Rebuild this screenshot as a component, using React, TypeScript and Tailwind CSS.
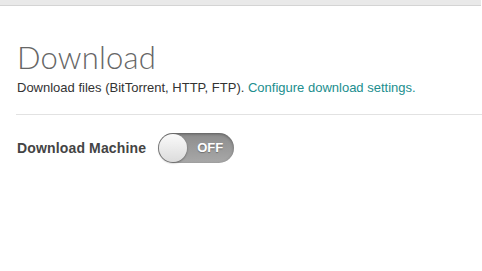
export default function App() {
  return (
    <div className="w-[482px] h-[271px] bg-white overflow-hidden font-['Liberation_Sans',Arial,sans-serif]">
      <div className="h-[6px] mr-[1px] bg-[#e9e9e9] border-b border-[#d4d4d4]" />
      <div className="pl-[17px] pt-[33px]">
        <h1 className="font-['Lato',sans-serif] font-light text-[31px] leading-[36px] text-[#666] tracking-[0.2px]">
          Download
        </h1>
        <p className="mt-[5px] text-[13px] leading-[16px] text-[#333]">
          Download files (BitTorrent, HTTP, FTP).{' '}
          <a href="#" className="text-[#218e8e]">
            Configure download settings.
          </a>
        </p>
      </div>
      <div className="ml-[16px] mt-[18px] h-px bg-[#e2e2e2]" />
      <div className="pl-[17px] mt-[18px] flex items-center gap-[12px]">
        <span className="text-[14px] font-bold text-[#444] tracking-[0.15px]">Download Machine</span>
        <div className="relative w-[76px] h-[30px] rounded-full bg-gradient-to-b from-[#8c8c8c] to-[#a8a8a8] shadow-[inset_0_1px_3px_rgba(0,0,0,0.35)] flex items-center">
          <div className="absolute left-[1px] top-[1px] w-[28px] h-[28px] rounded-full bg-gradient-to-b from-[#fafafa] to-[#dcdcdc] shadow-[0_1px_2px_rgba(0,0,0,0.4)]" />
          <span className="ml-[39px] text-[13px] font-bold text-white [text-shadow:0_1px_1px_rgba(0,0,0,0.3)]">
            OFF
          </span>
        </div>
      </div>
    </div>
  )
}
